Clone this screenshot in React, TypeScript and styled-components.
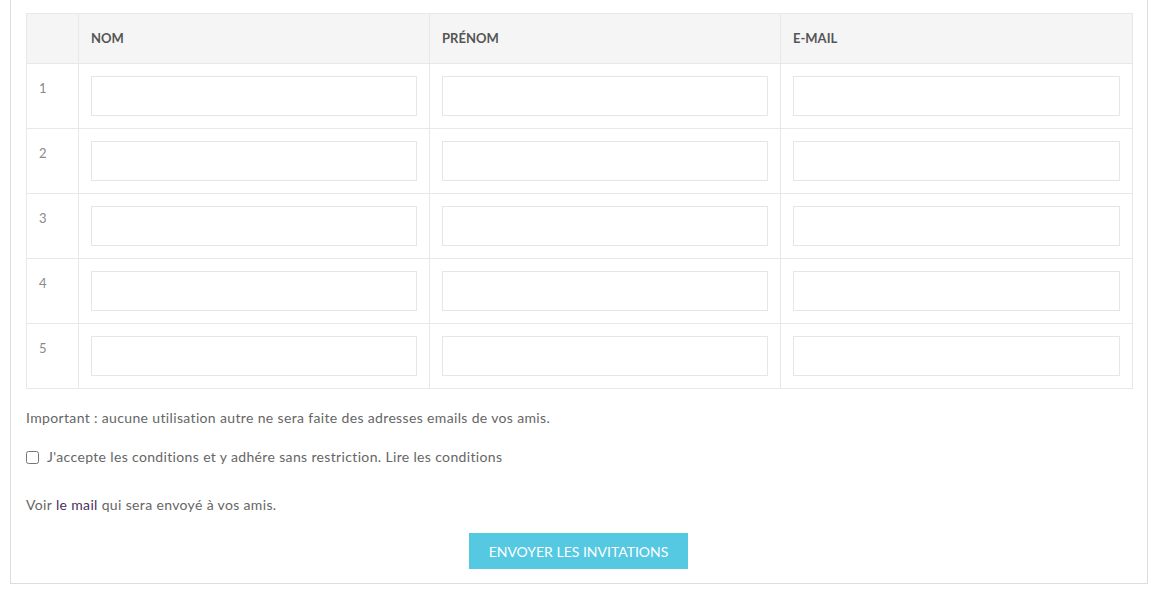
import { createGlobalStyle } from 'styled-components';
import styled from 'styled-components';

const GlobalStyle = createGlobalStyle`
  body {
    margin: 0;
    background: #ffffff;
    font-family: Lato, "Noto Sans", sans-serif;
    color: #666666;
  }
`;

const Panel = styled.div`
  margin: -3px 0 0 10px;
  width: 1138px;
  box-sizing: border-box;
  border: 1px solid #dddddd;
  padding: 15px 15px 14px;
  background: #ffffff;
`;

const InviteTable = styled.table`
  width: 1106px;
  border-collapse: collapse;
  table-layout: fixed;
  border: 1px solid #e8e8e8;
`;

const HeadCell = styled.th`
  height: 47px;
  padding: 0 12px 2px;
  background: #f5f5f5;
  border-left: 1px solid #e8e8e8;
  text-align: left;
  vertical-align: middle;
  font-size: 13px;
  font-weight: 700;
  color: #555555;
  text-transform: uppercase;
`;

const NumCell = styled.td`
  padding: 16px 12px 0;
  border: 1px solid #e8e8e8;
  vertical-align: top;
  font-size: 13px;
  color: #8a8a8a;
`;

const FieldCell = styled.td`
  padding: 12px 12px;
  border: 1px solid #e8e8e8;
  vertical-align: top;
`;

const Field = styled.input`
  display: block;
  width: 100%;
  height: 40px;
  box-sizing: border-box;
  border: 1px solid #e6e6e6;
  background: #ffffff;
  outline: none;
`;

const Note = styled.p`
  margin: 20px 0 0;
  font-size: 14px;
  line-height: 18px;
  letter-spacing: 0.35px;
  color: #666666;
`;

const CheckRow = styled.label`
  display: flex;
  align-items: center;
  gap: 8px;
  margin-top: 21px;
  font-size: 14px;
  line-height: 18px;
  letter-spacing: 0.35px;
  color: #666666;

  input {
    margin: 0;
    width: 13px;
    height: 13px;
  }
`;

const MailLine = styled.p`
  margin: 30px 0 0;
  font-size: 14px;
  line-height: 18px;
  letter-spacing: 0.35px;
  color: #666666;

  a {
    color: #4e2f60;
    text-decoration: none;
  }
`;

const Actions = styled.div`
  display: flex;
  justify-content: center;
  margin-top: 19px;
  padding-right: 1px;
`;

const SendButton = styled.button`
  width: 219px;
  height: 36px;
  border: none;
  background: #55c8e2;
  color: #ffffff;
  font-family: Lato, "Noto Sans", sans-serif;
  font-size: 14px;
  text-transform: uppercase;
  cursor: pointer;
`;

const rows = [1, 2, 3, 4, 5];

export default function App() {
  return (
    <>
      <GlobalStyle />
      <Panel>
        <InviteTable>
          <colgroup>
            <col style={{ width: 52 }} />
            <col style={{ width: 351 }} />
            <col style={{ width: 351 }} />
            <col style={{ width: 352 }} />
          </colgroup>
          <thead>
            <tr>
              <HeadCell />
              <HeadCell>Nom</HeadCell>
              <HeadCell>Prénom</HeadCell>
              <HeadCell>E-mail</HeadCell>
            </tr>
          </thead>
          <tbody>
            {rows.map(n => (
              <tr key={n}>
                <NumCell>{n}</NumCell>
                <FieldCell>
                  <Field type="text" />
                </FieldCell>
                <FieldCell>
                  <Field type="text" />
                </FieldCell>
                <FieldCell>
                  <Field type="email" />
                </FieldCell>
              </tr>
            ))}
          </tbody>
        </InviteTable>
        <Note>
          Important : aucune utilisation autre ne sera faite des adresses emails de vos amis.
        </Note>
        <CheckRow>
          <input type="checkbox" />
          J'accepte les conditions et y adhére sans restriction. Lire les conditions
        </CheckRow>
        <MailLine>
          Voir <a href="#">le mail</a> qui sera envoyé à vos amis.
        </MailLine>
        <Actions>
          <SendButton type="button">Envoyer les invitations</SendButton>
        </Actions>
      </Panel>
    </>
  );
}
